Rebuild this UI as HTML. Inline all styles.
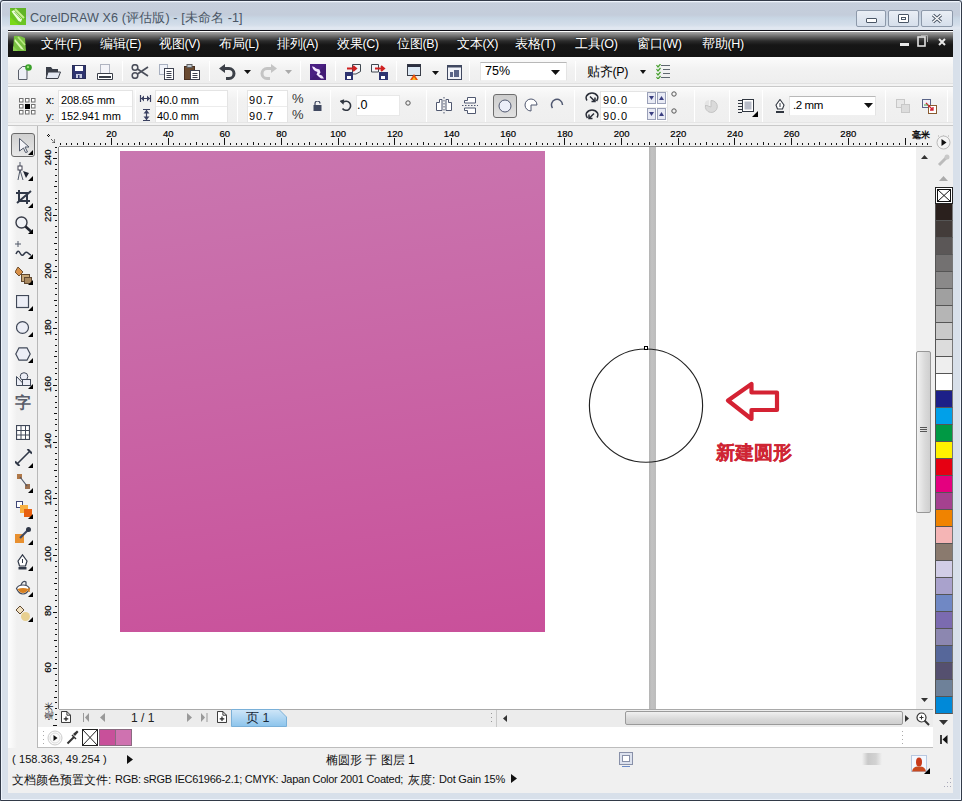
<!DOCTYPE html>
<html><head><meta charset="utf-8">
<style>
*{box-sizing:border-box;margin:0;padding:0}
html,body{width:962px;height:801px;overflow:hidden}
body{position:relative;background:#d7e1ee;font-family:"Liberation Sans",sans-serif;font-size:12px;color:#000}
.a{position:absolute}
#frame{left:0;top:0;width:962px;height:801px;border:1px solid #323a48;border-radius:3px 3px 0 0;background:linear-gradient(#f0f4fa 0,#c6cfdc 2px,#c4cddb 14px,#c8d6e4 17px,#d4deea 24px,#e2e8f1 27px,#d8e0ea 31px,#d8e0ea 100%);box-shadow:inset 1px 1px 0 #eef4fc, inset -1px -1px 0 #eef4fc}
#title{left:30px;top:10px;font-size:12.6px;color:#4a5564;white-space:nowrap;letter-spacing:0.1px}
.wb{top:10px;height:17px;border:1px solid #8d99aa;border-radius:2px;background:linear-gradient(#e9eef5,#d6dfeb)}
#menubar{left:8px;top:30px;width:945px;height:27px;border-top:1px solid #101018;background:linear-gradient(#fff 0,#fff 1px,#a8a8a8 1px,#6e6e6e 5px,#2c2c2c 10px,#161616 14px,#141414 100%)}
.mi{top:36px;color:#fff;font-size:12.5px;letter-spacing:-0.3px;white-space:nowrap;text-shadow:0 0 2px #000}
#tb1{left:8px;top:57px;width:945px;height:30px;background:linear-gradient(#ffffff 0,#fbfbfb 1px,#f2f2f2 12px,#eeeeee 26px,#e2e2e2 26px,#e2e2e2 27px,#f3f3f3 27px);border-bottom:1px solid #c9c9c9}
#tb2{left:8px;top:87px;width:945px;height:39px;background:linear-gradient(#ffffff 0,#fafafa 1px,#f1f1f1 14px,#efefef 35px,#e6e6e6 35px,#e6e6e6 36px,#f3f3f3 36px);border-bottom:1px solid #c9c9c9}
.sep{width:1px;background:#d3d3d3;border-right:1px solid #fff}
.inp{background:#fff;border:1px solid #e2e2e2}
#toolbox{left:8px;top:126px;width:30px;height:622px;background:linear-gradient(90deg,#fefefe,#f0f0f0 9px);border-right:1px solid #b8b8b8}
#hruler{left:38px;top:126px;width:895px;height:21px;background:#f0f0f0}
#vruler{left:38px;top:147px;width:21px;height:580px;background:#f0f0f0}
#canvas{left:59px;top:147px;width:857px;height:562px;background:#fff}
#vscroll{left:916px;top:147px;width:17px;height:562px;background:#f0f0f0}
#palette{left:933px;top:126px;width:20px;height:622px;background:#f0f0f0}
#navbar{left:59px;top:709px;width:874px;height:18px;background:#ececec;border-top:1px solid #a9a9a9}
#docpal{left:38px;top:727px;width:895px;height:21px;background:#fff;border-bottom:1px solid #bdbdbd}
#status{left:8px;top:748px;width:945px;height:45px;background:#f0f0f0}
.st{font-size:12px;color:#111;white-space:nowrap}
.sw{left:935px;width:18px;height:17px;border:1px solid #555;border-top:none;border-right-color:#777}
</style></head><body>
<div id="frame" class="a"></div>
<svg class="a" style="left:10px;top:8px" width="16" height="17" viewBox="0 0 16 17"><rect width="16" height="17" fill="#6cc524"/><path d="M0 0H16V12Z" fill="#5aa82a" opacity="0.6"/><path d="M1.5 3.5 L4 2 L12 11 L11 14 L8.5 13 Z" fill="#eaffd8"/><path d="M5 1 L14 10" stroke="#c8f090" stroke-width="2"/><path d="M4.5 4 L11 11" stroke="#8ab860" stroke-width="1"/><path d="M0 17 L0 9 L9 17Z" fill="#7ad818"/></svg>
<div id="title" class="a">CorelDRAW X6 (评估版) - [未命名 -1]</div>
<div class="a wb" style="left:856px;width:30px"><div class="a" style="left:9px;top:7px;width:11px;height:5px;border:1px solid #4a5666;border-radius:1px;background:#fff"></div></div>
<div class="a wb" style="left:888px;width:31px"><div class="a" style="left:9px;top:3px;width:11px;height:9px;border:1px solid #4a5666;border-radius:1px;background:#fff"><div class="a" style="left:2px;top:2px;width:5px;height:3px;border:1px solid #4a5666"></div></div></div>
<div class="a wb" style="left:921px;width:32px"><svg class="a" style="left:9px;top:2px" width="12" height="11"><path d="M2 2 L10 9 M10 2 L2 9" stroke="#4a5666" stroke-width="3.2"/><path d="M2 2 L10 9 M10 2 L2 9" stroke="#fff" stroke-width="1.3"/></svg></div>

<div id="menubar" class="a"></div>
<svg class="a" style="left:12px;top:35px" width="15" height="17" viewBox="0 0 15 17"><path d="M2 1 Q7 0 13 3 L14 16 H1 Z" fill="#78c040"/><path d="M3 4 L10 12 L12 15 L9 14 L2.5 6Z" fill="#d8f8b0"/><path d="M6 2 L13 10" stroke="#b8e880" stroke-width="1.6"/><path d="M1 16 V11 L6 16Z" fill="#8ad050"/></svg>
<div class="a mi" style="left:41px">文件(F)</div>
<div class="a mi" style="left:100px">编辑(E)</div>
<div class="a mi" style="left:159px">视图(V)</div>
<div class="a mi" style="left:219px">布局(L)</div>
<div class="a mi" style="left:277px">排列(A)</div>
<div class="a mi" style="left:337px">效果(C)</div>
<div class="a mi" style="left:397px">位图(B)</div>
<div class="a mi" style="left:457px">文本(X)</div>
<div class="a mi" style="left:515px">表格(T)</div>
<div class="a mi" style="left:575px">工具(O)</div>
<div class="a mi" style="left:637px">窗口(W)</div>
<div class="a mi" style="left:702px">帮助(H)</div>
<svg class="a" style="left:898px;top:33px" width="52" height="16"><rect x="2" y="10" width="9" height="3" fill="#e8e8e8"/><rect x="20" y="4" width="7" height="9" fill="none" stroke="#e0e0e0" stroke-width="1.6"/><path d="M23 2.5H29.5V9" fill="none" stroke="#aaa"/><path d="M41 6L47 12M47 6L41 12" stroke="#e8e8e8" stroke-width="2"/></svg>
<!--MENU_END-->
<div id="tb1" class="a"></div>
<!-- new -->
<svg class="a" style="left:16px;top:64px" width="17" height="16" viewBox="0 0 17 16"><path d="M2.5 15.5 V6 L6.5 2.5 H11 V15.5 Z" fill="#eef0f6" stroke="#5a5f6a"/><circle cx="12.5" cy="3.5" r="3.3" fill="#3aa02a"/><circle cx="12" cy="3" r="1.2" fill="#9be07a"/></svg>
<!-- open -->
<svg class="a" style="left:45px;top:65px" width="16" height="15" viewBox="0 0 16 15"><path d="M1 2 H6 L7.5 4 H13 V13.5 H1 Z" fill="#3a3e48"/><path d="M3 7 H15.5 L13 13.5 H1 Z" fill="#e4e8f2" stroke="#3a3e48"/></svg>
<!-- save -->
<svg class="a" style="left:72px;top:65px" width="14" height="14" viewBox="0 0 14 14"><rect x="0.5" y="0.5" width="13" height="13" fill="#2e3470" stroke="#2a2e58"/><rect x="3" y="1" width="8" height="5" fill="#fff"/><rect x="4" y="9" width="6" height="4" fill="#c8cce0"/><rect x="6" y="10" width="1.5" height="3" fill="#2e3470"/></svg>
<!-- print -->
<svg class="a" style="left:97px;top:64px" width="16" height="16" viewBox="0 0 16 16"><rect x="3.5" y="0.5" width="9" height="9" fill="#f4f4f8" stroke="#b0b4c0"/><path d="M0.5 9.5 H15.5 V15.5 H0.5 Z" fill="#fff" stroke="#3a3e48"/><rect x="2" y="12" width="12" height="2" fill="#3a3e48"/></svg>
<div class="a sep" style="left:122px;top:61px;height:20px"></div>
<!-- scissors -->
<svg class="a" style="left:131px;top:64px" width="18" height="15" viewBox="0 0 18 15"><circle cx="4" cy="3.5" r="2.8" fill="none" stroke="#4a4e5a" stroke-width="1.5"/><circle cx="4" cy="11.5" r="2.8" fill="none" stroke="#4a4e5a" stroke-width="1.5"/><path d="M6.5 5 L17 12 M6.5 10 L17 3" stroke="#4a4e5a" stroke-width="1.6"/></svg>
<!-- copy -->
<svg class="a" style="left:159px;top:64px" width="15" height="16" viewBox="0 0 15 16"><rect x="0.5" y="0.5" width="8" height="10" fill="#f0f2f8" stroke="#a8b0c0"/><rect x="5.5" y="4.5" width="9" height="11" fill="#fff" stroke="#3e4250"/><path d="M7.5 7.5 H12.5 M7.5 9.5 H12.5 M7.5 11.5 H12.5 M7.5 13.5 H12.5" stroke="#3e4250"/></svg>
<!-- paste -->
<svg class="a" style="left:184px;top:64px" width="16" height="16" viewBox="0 0 16 16"><rect x="0.5" y="2.5" width="10" height="13" fill="#6a4a30" stroke="#4a3020"/><rect x="3" y="0.5" width="5" height="3" fill="#c0c8d0" stroke="#606060"/><rect x="6.5" y="6.5" width="9" height="9" fill="#fff" stroke="#3e4250"/><path d="M8.5 9.5 H13.5 M8.5 11.5 H13.5 M8.5 13.5 H13.5" stroke="#3e4250"/></svg>
<div class="a sep" style="left:209px;top:61px;height:20px"></div>
<!-- undo -->
<svg class="a" style="left:219px;top:64px" width="17" height="16" viewBox="0 0 17 16"><path d="M5 4.5 H10 A5 5 0 0 1 10 14.5 H7" fill="none" stroke="#3c4048" stroke-width="3"/><path d="M0 4.5 L6 0 V9 Z" fill="#3c4048"/></svg>
<svg class="a" style="left:244px;top:70px" width="7" height="4"><path d="M0 0 H7 L3.5 4 Z" fill="#111"/></svg>
<!-- redo -->
<svg class="a" style="left:260px;top:64px" width="17" height="16" viewBox="0 0 17 16"><path d="M12 4.5 H7 A5 5 0 0 0 7 14.5 H10" fill="none" stroke="#c4c4c4" stroke-width="3"/><path d="M17 4.5 L11 0 V9 Z" fill="#c4c4c4"/></svg>
<svg class="a" style="left:285px;top:70px" width="7" height="4"><path d="M0 0 H7 L3.5 4 Z" fill="#aaa"/></svg>
<div class="a sep" style="left:300px;top:61px;height:20px"></div>
<!-- corel connect -->
<svg class="a" style="left:310px;top:64px" width="16" height="16" viewBox="0 0 16 16"><rect width="16" height="16" fill="#4a1f82"/><path d="M0 16 L16 0 V16Z" fill="#3a1868" opacity="0.5"/><path d="M2 2.5 Q4 2 6 4.5 L9.5 5.5 L10.5 8.5 L9 10.5 L12 11.5 L14 14.5 L11 14.5 L8.5 12.5 L6.5 10.5 L7.5 8 Q3.5 7 2 2.5Z" fill="#f4e8ff"/></svg>
<div class="a sep" style="left:335px;top:61px;height:20px"></div>
<!-- import -->
<svg class="a" style="left:345px;top:64px" width="16" height="16" viewBox="0 0 16 16"><path d="M7.5 0.5 H15.5 V7.5 L11 10 H7.5 Z" fill="#f4f4f8" stroke="#404850"/><rect x="0" y="8" width="8" height="8" fill="#2e3470"/><rect x="2" y="12" width="4" height="3" fill="#fff"/><path d="M2 4.5 H11 M8 2 L11 4.5 L8 7" stroke="#d02020" stroke-width="2" fill="none"/></svg>
<!-- export -->
<svg class="a" style="left:371px;top:64px" width="17" height="16" viewBox="0 0 17 16"><path d="M0.5 0.5 H7.5 V8 H0.5 Z" fill="#f4f4f8" stroke="#404850"/><rect x="8" y="8" width="9" height="8" fill="#2e3470"/><rect x="10" y="12" width="4" height="3" fill="#fff"/><path d="M4 4.5 H13 M10 2 L13 4.5 L10 7" stroke="#d02020" stroke-width="2" fill="none"/></svg>
<div class="a sep" style="left:396px;top:61px;height:20px"></div>
<!-- publish -->
<svg class="a" style="left:407px;top:64px" width="14" height="16" viewBox="0 0 14 16"><rect x="0.5" y="0.5" width="13" height="11" fill="#dce8f4" stroke="#3a3e48"/><rect x="0.5" y="0.5" width="13" height="2.5" fill="#2a2e40"/><path d="M3 16 L7 10 L11 16 Z" fill="#e85010"/><path d="M5 16 L7 13 L9 16Z" fill="#f8c020"/></svg>
<svg class="a" style="left:432px;top:71px" width="7" height="4"><path d="M0 0 H7 L3.5 4 Z" fill="#111"/></svg>
<!-- app launcher -->
<svg class="a" style="left:447px;top:65px" width="15" height="15" viewBox="0 0 15 15"><rect x="0.5" y="0.5" width="14" height="14" fill="#f0f2f8" stroke="#404860"/><rect x="0.5" y="0.5" width="14" height="2" fill="#404860"/><path d="M3 12 V7 H6 V12 Z M7 12 V5 H12 V12 Z" fill="#5a6488"/></svg>
<div class="a sep" style="left:469px;top:61px;height:20px"></div>
<!-- zoom combo -->
<div class="a inp" style="left:480px;top:62px;width:87px;height:19px;border-color:#b8b8b8 #e4e4e4 #f0f0f0 #e4e4e4"></div>
<div class="a" style="left:485px;top:64px;font-size:12.5px">75%</div>
<svg class="a" style="left:551px;top:70px" width="9" height="5"><path d="M0 0 H9 L4.5 5 Z" fill="#111"/></svg>
<div class="a sep" style="left:575px;top:61px;height:20px"></div>
<div class="a" style="left:587px;top:64px;font-size:12.5px;letter-spacing:-0.3px">贴齐(P)</div>
<svg class="a" style="left:640px;top:70px" width="6" height="4"><path d="M0 0 H6 L3 4 Z" fill="#111"/></svg>
<svg class="a" style="left:656px;top:64px" width="15" height="15" viewBox="0 0 15 15"><path d="M5 1.5 H14 M7 5.5 H14 M7 9.5 H14 M5 13.5 H14" stroke="#606870" stroke-width="1"/><path d="M0.5 1 L2 3 L4.5 0 M0.5 5 L2 7 L4.5 4 M0.5 9 L2 11 L4.5 8 M0.5 13 L2 15 L4.5 12" stroke="#48a030" stroke-width="1.2" fill="none"/></svg>
<!--TB1_END-->
<div id="tb2" class="a"></div>
<!-- grid icon -->
<svg class="a" style="left:19px;top:98px" width="17" height="17" viewBox="0 0 17 17"><g fill="#fff" stroke="#707070"><rect x="0.5" y="0.5" width="3.5" height="3.5"/><rect x="6.5" y="0.5" width="3.5" height="3.5"/><rect x="12.5" y="0.5" width="3.5" height="3.5"/><rect x="0.5" y="6.5" width="3.5" height="3.5"/><rect x="12.5" y="6.5" width="3.5" height="3.5"/><rect x="0.5" y="12.5" width="3.5" height="3.5"/><rect x="6.5" y="12.5" width="3.5" height="3.5"/><rect x="12.5" y="12.5" width="3.5" height="3.5"/></g><rect x="6" y="6" width="5" height="5" fill="#000"/></svg>
<div class="a" style="left:46px;top:92px;font-size:11px;line-height:16px;letter-spacing:-0.15px">x:<br>y:</div>
<div class="a inp" style="left:58px;top:90px;width:75px;height:33px;border-color:#e4e4e4"><div class="a" style="left:0;top:15px;width:73px;height:1px;background:#ececec"></div></div>
<div class="a" style="left:61px;top:92px;font-size:11px;line-height:16px;letter-spacing:-0.15px;white-space:nowrap">208.65 mm<br>152.941 mm</div>
<div class="a sep" style="left:135px;top:90px;height:32px;background:#e0e0e0"></div>
<svg class="a" style="left:139px;top:95px" width="13" height="7" viewBox="0 0 13 7"><path d="M1.5 0 V7 M11.5 0 V7 M2 3.5 H11" stroke="#3a4060" stroke-width="1.2"/><path d="M2 3.5 L5 0.5 V6.5Z M11 3.5 L8 0.5 V6.5Z" fill="#3a4060"/></svg>
<svg class="a" style="left:143px;top:109px" width="7" height="12" viewBox="0 0 7 12"><path d="M0 0.5 H7 M0 11.5 H7 M3.5 1 V11" stroke="#3a4060" stroke-width="1.2"/><path d="M3.5 1 L0.5 4.5 H6.5Z M3.5 11 L0.5 7.5 H6.5Z" fill="#3a4060"/></svg>
<div class="a inp" style="left:155px;top:90px;width:73px;height:33px;border-color:#e4e4e4"><div class="a" style="left:0;top:15px;width:71px;height:1px;background:#ececec"></div></div>
<div class="a" style="left:157px;top:92px;font-size:11px;line-height:16px;letter-spacing:-0.15px;white-space:nowrap">40.0 mm<br>40.0 mm</div>
<div class="a sep" style="left:237px;top:90px;height:32px"></div>
<div class="a inp" style="left:247px;top:90px;width:41px;height:33px;border-color:#e4e4e4"><div class="a" style="left:0;top:15px;width:39px;height:1px;background:#ececec"></div></div>
<div class="a" style="left:249px;top:92px;font-size:11px;line-height:16px;letter-spacing:0.9px;white-space:nowrap">90.7<br>90.7</div>
<div class="a" style="left:292px;top:91px;font-size:13px;line-height:16px;color:#333">%<br>%</div>
<svg class="a" style="left:313px;top:101px" width="9" height="10" viewBox="0 0 9 10"><path d="M2 4 V2.5 A2.5 2.5 0 0 1 7 2.5" fill="none" stroke="#404860" stroke-width="1.2"/><rect x="0.5" y="4" width="8" height="6" fill="#404860"/></svg>
<div class="a sep" style="left:330px;top:90px;height:32px"></div>
<svg class="a" style="left:340px;top:99px" width="12" height="13" viewBox="0 0 12 13"><path d="M3 3.5 A4.5 4.5 0 1 1 2.5 9.5" fill="none" stroke="#303640" stroke-width="1.6"/><path d="M0 1 L5 1 L2.5 6 Z" fill="#303640" transform="rotate(-20 2.5 3)"/></svg>
<div class="a inp" style="left:356px;top:95px;width:44px;height:21px;border-color:#e8e8e8"></div>
<div class="a" style="left:357px;top:98px;font-size:12.5px">.0</div>
<svg class="a" style="left:405px;top:100px" width="6" height="6"><circle cx="3" cy="3" r="2.2" fill="none" stroke="#555"/></svg>
<div class="a sep" style="left:426px;top:90px;height:32px"></div>
<svg class="a" style="left:436px;top:97px" width="16" height="17" viewBox="0 0 16 17"><path d="M0.5 5.5 H3.5 V2.5 H6 V13.5 H0.5 Z M15.5 5.5 H12.5 V2.5 H10 V13.5 H15.5 Z" fill="#fff" stroke="#505870"/><path d="M8 0 V17" stroke="#505870" stroke-dasharray="1.5 1.5"/></svg>
<svg class="a" style="left:462px;top:97px" width="16" height="17" viewBox="0 0 16 17"><path d="M5.5 0.5 V3.5 H2.5 V6 H13.5 V0.5 Z M5.5 16.5 V13.5 H2.5 V11 H13.5 V16.5 Z" fill="#fff" stroke="#505870"/><path d="M0 8.5 H16" stroke="#505870" stroke-dasharray="1.5 1.5"/></svg>
<div class="a sep" style="left:485px;top:90px;height:32px"></div>
<div class="a" style="left:493px;top:94px;width:24px;height:24px;border:1px solid #6e6e6e;border-radius:3px;background:linear-gradient(#cdcdcd,#e2e2e2)"></div>
<svg class="a" style="left:498px;top:99px" width="14" height="14"><circle cx="7" cy="7" r="6" fill="#eceef8" stroke="#505870"/></svg>
<svg class="a" style="left:524px;top:98px" width="14" height="14" viewBox="0 0 14 14"><path d="M7 7 H13 A6 6 0 1 0 7 13 Z" fill="#fff" stroke="#505870"/></svg>
<svg class="a" style="left:550px;top:98px" width="14" height="14" viewBox="0 0 14 14"><path d="M2.5 10 A5.5 5.5 0 1 1 12.5 7" fill="none" stroke="#505870" stroke-width="1.5"/></svg>
<div class="a sep" style="left:574px;top:90px;height:32px"></div>
<svg class="a" style="left:585px;top:92px" width="14" height="11" viewBox="0 0 14 11"><path d="M2 8.5 Q0.5 6 1.5 4 Q3.5 1 7 1 Q10.5 1 12.5 4 Q13.5 6 11.5 9" fill="none" stroke="#2a2e38" stroke-width="1.5"/><path d="M5 4.5 L10 9.5 M10 5.5 V9.5 H6.5" fill="none" stroke="#2a2e38" stroke-width="1.5"/></svg><svg class="a" style="left:585px;top:109px" width="14" height="11" viewBox="0 0 14 11"><path d="M2.5 9 Q0.5 6 1.5 4 Q3.5 1 7 1 Q10.5 1 12.5 4 Q13.5 6 12 8.5" fill="none" stroke="#2a2e38" stroke-width="1.5"/><path d="M9 4.5 L4 9.5 M4 5.5 V9.5 H7.5" fill="none" stroke="#2a2e38" stroke-width="1.5"/></svg>
<div class="a inp" style="left:600px;top:91px;width:68px;height:31px;border-color:#e4e4e4"><div class="a" style="left:0;top:15px;width:66px;height:1px;background:#ececec"></div></div>
<div class="a" style="left:603px;top:92px;font-size:11px;line-height:16px;letter-spacing:0.9px">90.0<br>90.0</div>
<div class="a" style="left:647px;top:92px;width:9px;height:12px;border:1px solid #9aa0b8;background:#e8eaf4"></div>
<div class="a" style="left:657px;top:92px;width:9px;height:12px;border:1px solid #9aa0b8;background:#e8eaf4"></div>
<div class="a" style="left:647px;top:108px;width:9px;height:12px;border:1px solid #9aa0b8;background:#e8eaf4"></div>
<div class="a" style="left:657px;top:108px;width:9px;height:12px;border:1px solid #9aa0b8;background:#e8eaf4"></div>
<svg class="a" style="left:649px;top:96px" width="5" height="4"><path d="M0 0H5L2.5 4Z" fill="#3a3e80"/></svg>
<svg class="a" style="left:659px;top:96px" width="5" height="4"><path d="M0 4H5L2.5 0Z" fill="#3a3e80"/></svg>
<svg class="a" style="left:649px;top:112px" width="5" height="4"><path d="M0 0H5L2.5 4Z" fill="#3a3e80"/></svg>
<svg class="a" style="left:659px;top:112px" width="5" height="4"><path d="M0 4H5L2.5 0Z" fill="#3a3e80"/></svg>
<svg class="a" style="left:671px;top:91px" width="6" height="6"><circle cx="3" cy="3" r="2.2" fill="none" stroke="#555"/></svg>
<svg class="a" style="left:671px;top:108px" width="6" height="6"><circle cx="3" cy="3" r="2.2" fill="none" stroke="#555"/></svg>
<div class="a sep" style="left:694px;top:90px;height:32px"></div>
<svg class="a" style="left:704px;top:99px" width="14" height="15" viewBox="0 0 14 15"><path d="M7 8 V1.5 A6 6 0 1 1 1.5 6 Z" fill="#dadada" stroke="#c4c4c4"/><path d="M5 6 L5 1 A5 5 0 0 0 0.5 5.5 Z" fill="#e4e4e4"/></svg>
<div class="a sep" style="left:729px;top:90px;height:32px"></div>
<svg class="a" style="left:738px;top:98px" width="20" height="19" viewBox="0 0 20 19"><path d="M0 2.5 H4 M0 5.5 H4 M0 8.5 H4 M0 11.5 H4 M0 14.5 H4" stroke="#303640"/><rect x="4.5" y="1.5" width="11" height="12" fill="#fff" stroke="#303640"/><rect x="6.5" y="3.5" width="7" height="8" fill="#b8bcc8"/><path d="M20 13 V19 H14 Z" fill="#000"/></svg>
<div class="a sep" style="left:762px;top:90px;height:32px"></div>
<svg class="a" style="left:775px;top:99px" width="10" height="14" viewBox="0 0 10 14"><path d="M5 0.5 L9 6 L7.5 10 H2.5 L1 6 Z" fill="#fff" stroke="#303640" stroke-width="1.1"/><path d="M5 4 V8" stroke="#303640"/><rect x="1" y="12" width="8" height="2" fill="#303640"/></svg>
<div class="a inp" style="left:789px;top:96px;width:87px;height:20px;border-color:#b8b8b8 #e4e4e4 #f0f0f0 #e4e4e4"></div>
<div class="a" style="left:793px;top:99px;font-size:11.5px;letter-spacing:-0.4px">.2 mm</div>
<svg class="a" style="left:864px;top:103px" width="9" height="5"><path d="M0 0 H9 L4.5 5 Z" fill="#111"/></svg>
<div class="a sep" style="left:885px;top:90px;height:32px"></div>
<svg class="a" style="left:896px;top:99px" width="14" height="14" viewBox="0 0 14 14"><rect x="0.5" y="0.5" width="8" height="8" fill="#e8e8e8" stroke="#c8c8c8"/><rect x="5.5" y="5.5" width="8" height="8" fill="#dcdcdc" stroke="#c8c8c8"/></svg>
<svg class="a" style="left:922px;top:99px" width="15" height="15" viewBox="0 0 15 15"><rect x="0.5" y="0.5" width="8" height="8" fill="#f0f0f8" stroke="#5a6488"/><rect x="6.5" y="6.5" width="8" height="8" fill="#fff" stroke="#8a5a30"/><path d="M4 4 L11 11 M8 11 H11 V8" stroke="#d02030" fill="none" stroke-width="1.3"/><path d="M2 6 H6" stroke="#40a040"/></svg>
<div class="a sep" style="left:947px;top:90px;height:32px"></div>
<!--TB2_END-->
<div id="toolbox" class="a"></div>
<div class="a" style="left:11px;top:133px;width:24px;height:24px;border:1px solid #6a6a6a;border-radius:3px;background:linear-gradient(#d0d0d0,#e8e8e8)"></div>
<svg class="a" style="left:19px;top:138px" width="11" height="15" viewBox="0 0 11 15"><path d="M0.5 0.5 L10 9 H6 L8.5 14 L6.5 14.5 L4.5 10 L0.5 13 Z" fill="#f4f4f8" stroke="#505868"/></svg>
<svg class="a" style="left:16px;top:162px" width="18" height="20" viewBox="0 0 18 20"><path d="M4 0 V4 M4 8 L2 18 M4 8 L7 18" stroke="#505868"/><rect x="2" y="4" width="4" height="4" fill="#fff" stroke="#404050"/><path d="M7 9 L13 11 L10 16 Z" fill="#202430"/></svg>
<svg class="a" style="left:16px;top:190px" width="16" height="15" viewBox="0 0 16 15"><path d="M3 0V11H14 M0 3H11V14 M1 13L15 1" stroke="#303848" stroke-width="2" fill="none"/></svg>
<svg class="a" style="left:15px;top:216px" width="17" height="16" viewBox="0 0 17 16"><circle cx="6.5" cy="6.5" r="5.5" fill="#f0f2f6" stroke="#383c48" stroke-width="1.4"/><path d="M10.5 10.5L16 15.5" stroke="#202430" stroke-width="2.6"/></svg>
<svg class="a" style="left:15px;top:241px" width="17" height="18" viewBox="0 0 17 18"><path d="M3 0V6M0 3H6" stroke="#505868"/><path d="M1 13 Q3 8 5 12 T9 13 T13 12 T16 14" fill="none" stroke="#303848" stroke-width="1.5"/></svg>
<svg class="a" style="left:15px;top:266px" width="18" height="19" viewBox="0 0 18 19"><path d="M3 1 L8 6 L4 10 L0 6Z" fill="#d89048" stroke="#705030"/><rect x="6.5" y="8.5" width="8" height="7" fill="#c8a878" stroke="#604830"/><rect x="9.5" y="11.5" width="7" height="6" fill="#a88860" stroke="#604830"/></svg>
<svg class="a" style="left:16px;top:295px" width="14" height="14" viewBox="0 0 14 14"><rect x="0.5" y="0.5" width="12" height="12" fill="#eceef6" stroke="#404858" stroke-width="1.2"/></svg>
<svg class="a" style="left:16px;top:321px" width="14" height="13" viewBox="0 0 14 13"><ellipse cx="6.5" cy="6.5" rx="6" ry="5.8" fill="#eceef6" stroke="#404858" stroke-width="1.2"/></svg>
<svg class="a" style="left:15px;top:347px" width="16" height="14" viewBox="0 0 16 14"><path d="M4 0.8 H12 L15.2 7 L12 13.2 H4 L0.8 7 Z" fill="#eceef6" stroke="#404858" stroke-width="1.2"/></svg>
<svg class="a" style="left:16px;top:372px" width="15" height="14" viewBox="0 0 15 14"><path d="M0.5 4.5 V13.5 H9 Z" fill="#eceef6" stroke="#404858"/><circle cx="8" cy="4.5" r="3.8" fill="#eceef6" stroke="#404858"/><rect x="6.5" y="7.5" width="8" height="6" fill="#eceef6" stroke="#404858"/></svg>
<div class="a" style="left:15px;top:393px;font-size:16px;font-weight:bold;color:#5a5e6a;line-height:20px">字</div>
<svg class="a" style="left:16px;top:425px" width="14" height="15" viewBox="0 0 14 15"><rect x="0.5" y="0.5" width="13" height="14" fill="#fff" stroke="#404858" stroke-width="1.2"/><path d="M0.5 5.5H13.5M0.5 10H13.5M5 0.5V14.5M9.5 0.5V14.5" stroke="#404858"/></svg>
<svg class="a" style="left:15px;top:449px" width="17" height="17" viewBox="0 0 17 17"><path d="M2 15 L15 2" stroke="#303848" stroke-width="1.6"/><path d="M0 12.5 L4.5 17 M12.5 0 L17 4.5" stroke="#303848" stroke-width="2"/></svg>
<svg class="a" style="left:17px;top:474px" width="14" height="16" viewBox="0 0 14 16"><rect x="0" y="0" width="5" height="5" fill="#b07848"/><rect x="8" y="10" width="5" height="5" fill="#9a7050"/><path d="M3 3 L10 12" stroke="#505868" stroke-width="1.2"/></svg>
<svg class="a" style="left:16px;top:501px" width="17" height="17" viewBox="0 0 17 17"><rect x="0.5" y="0.5" width="6" height="6" fill="#fff" stroke="#404878"/><rect x="4" y="4" width="8" height="8" fill="#f8b040"/><rect x="8" y="8" width="8" height="8" fill="#e86010"/></svg>
<svg class="a" style="left:15px;top:527px" width="17" height="17" viewBox="0 0 17 17"><rect x="0" y="7" width="9" height="9" fill="#e89030"/><path d="M5 11 L13 3" stroke="#404860" stroke-width="2.2"/><circle cx="13.5" cy="2.5" r="2.5" fill="#303848"/></svg>
<svg class="a" style="left:17px;top:554px" width="11" height="16" viewBox="0 0 11 16"><path d="M5.5 0.8 L10 7 L8.5 12 H2.5 L1 7 Z" fill="#fff" stroke="#303848" stroke-width="1.2"/><path d="M5.5 5V9" stroke="#303848"/><rect x="1.5" y="13" width="8" height="2.5" fill="#303848"/></svg>
<svg class="a" style="left:15px;top:579px" width="16" height="17" viewBox="0 0 16 17"><path d="M6 6 Q8 1 11 3 L11 8" fill="none" stroke="#404858" stroke-width="1.2"/><path d="M1.5 9.5 Q3 6 8 6 Q13 6 14.5 9.5 Q12 15 8 15 Q4 15 1.5 9.5Z" fill="#fff" stroke="#404858" stroke-width="1.2"/><path d="M2.5 10 Q8 8 13.5 10 Q11.5 14 8 14 Q4.5 14 2.5 10Z" fill="#d88020"/><path d="M14 9 V13" stroke="#d88020" stroke-width="1.5"/></svg>
<svg class="a" style="left:16px;top:605px" width="15" height="17" viewBox="0 0 15 17"><path d="M4 1 L8 5 L4 9 L0 5 Z" fill="#f0e0c0" stroke="#604830"/><circle cx="9.5" cy="11.5" r="4.5" fill="#e8d090"/></svg>
<svg class="a" width="962" height="801" style="left:0;top:0;pointer-events:none"><g fill="#000"><path d="M28 155H33V150Z"/><path d="M28 181H33V176Z"/><path d="M28 208H33V203Z"/><path d="M28 234H33V229Z"/><path d="M28 259H33V254Z"/><path d="M28 285H33V280Z"/><path d="M28 311H33V306Z"/><path d="M28 337H33V332Z"/><path d="M28 363H33V358Z"/><path d="M28 389H33V384Z"/><path d="M28 468H33V463Z"/><path d="M28 493H33V488Z"/><path d="M28 519H33V514Z"/><path d="M28 545H33V540Z"/><path d="M28 571H33V566Z"/><path d="M28 597H33V592Z"/><path d="M28 622H33V617Z"/></g></svg>
<div id="hruler" class="a"></div>
<div id="vruler" class="a"></div>
<div id="canvas" class="a"></div>
<!--R0--><svg class="a" style="left:38px;top:126px" width="895" height="21"><path d="M22.5 17V19 M28.5 17V19 M33.5 17V19 M39.5 17V19 M45.5 16V19 M50.5 17V19 M56.5 17V19 M62.5 17V19 M67.5 17V19 M73.5 12V19 M79.5 17V19 M84.5 17V19 M90.5 17V19 M96.5 17V19 M101.5 16V19 M107.5 17V19 M113.5 17V19 M118.5 17V19 M124.5 17V19 M130.5 12V19 M135.5 17V19 M141.5 17V19 M147.5 17V19 M152.5 17V19 M158.5 16V19 M164.5 17V19 M169.5 17V19 M175.5 17V19 M181.5 17V19 M186.5 12V19 M192.5 17V19 M198.5 17V19 M203.5 17V19 M209.5 17V19 M215.5 16V19 M220.5 17V19 M226.5 17V19 M232.5 17V19 M237.5 17V19 M243.5 12V19 M249.5 17V19 M254.5 17V19 M260.5 17V19 M266.5 17V19 M271.5 16V19 M277.5 17V19 M283.5 17V19 M288.5 17V19 M294.5 17V19 M300.5 12V19 M305.5 17V19 M311.5 17V19 M317.5 17V19 M322.5 17V19 M328.5 16V19 M334.5 17V19 M339.5 17V19 M345.5 17V19 M351.5 17V19 M356.5 12V19 M362.5 17V19 M368.5 17V19 M373.5 17V19 M379.5 17V19 M385.5 16V19 M390.5 17V19 M396.5 17V19 M402.5 17V19 M407.5 17V19 M413.5 12V19 M419.5 17V19 M424.5 17V19 M430.5 17V19 M436.5 17V19 M441.5 16V19 M447.5 17V19 M453.5 17V19 M458.5 17V19 M464.5 17V19 M470.5 12V19 M475.5 17V19 M481.5 17V19 M487.5 17V19 M492.5 17V19 M498.5 16V19 M504.5 17V19 M509.5 17V19 M515.5 17V19 M521.5 17V19 M526.5 12V19 M532.5 17V19 M538.5 17V19 M543.5 17V19 M549.5 17V19 M555.5 16V19 M560.5 17V19 M566.5 17V19 M572.5 17V19 M577.5 17V19 M583.5 12V19 M589.5 17V19 M594.5 17V19 M600.5 17V19 M606.5 17V19 M611.5 16V19 M617.5 17V19 M623.5 17V19 M628.5 17V19 M634.5 17V19 M640.5 12V19 M645.5 17V19 M651.5 17V19 M657.5 17V19 M662.5 17V19 M668.5 16V19 M674.5 17V19 M679.5 17V19 M685.5 17V19 M691.5 17V19 M696.5 12V19 M702.5 17V19 M708.5 17V19 M713.5 17V19 M719.5 17V19 M725.5 16V19 M730.5 17V19 M736.5 17V19 M742.5 17V19 M747.5 17V19 M753.5 12V19 M759.5 17V19 M764.5 17V19 M770.5 17V19 M776.5 17V19 M781.5 16V19 M787.5 17V19 M793.5 17V19 M798.5 17V19 M804.5 17V19 M810.5 12V19 M815.5 17V19 M821.5 17V19 M827.5 17V19 M832.5 17V19 M838.5 16V19 M844.5 17V19 M849.5 17V19 M855.5 17V19 M861.5 17V19 M867.5 12V19 M872.5 17V19 M878.5 17V19 M884.5 17V19 M889.5 17V19" stroke="#111" stroke-width="1"/><path d="M21 20.5H894" stroke="#8c8c8c"/><g font-family="Liberation Sans" font-size="9.5" text-anchor="middle" fill="#000" stroke="#000" stroke-width="0.2"><text x="73.5" y="10.5">20</text><text x="130.2" y="10.5">40</text><text x="186.8" y="10.5">60</text><text x="243.5" y="10.5">80</text><text x="300.2" y="10.5">100</text><text x="356.9" y="10.5">120</text><text x="413.6" y="10.5">140</text><text x="470.2" y="10.5">160</text><text x="526.9" y="10.5">180</text><text x="583.6" y="10.5">200</text><text x="640.3" y="10.5">220</text><text x="697.0" y="10.5">240</text><text x="753.6" y="10.5">260</text><text x="810.3" y="10.5">280</text></g><text x="874" y="11.5" font-size="8.5" fill="#000" stroke="#000" stroke-width="0.3">毫米</text></svg>
<svg class="a" style="left:38px;top:147px" width="21" height="580"><path d="M17 0.5H19 M17 5.5H19 M15 11.5H19 M17 17.5H19 M17 22.5H19 M17 28.5H19 M17 34.5H19 M16 39.5H19 M17 45.5H19 M17 51.5H19 M17 56.5H19 M17 62.5H19 M15 68.5H19 M17 73.5H19 M17 79.5H19 M17 85.5H19 M17 90.5H19 M16 96.5H19 M17 102.5H19 M17 107.5H19 M17 113.5H19 M17 119.5H19 M15 124.5H19 M17 130.5H19 M17 136.5H19 M17 141.5H19 M17 147.5H19 M16 153.5H19 M17 158.5H19 M17 164.5H19 M17 170.5H19 M17 175.5H19 M15 181.5H19 M17 187.5H19 M17 192.5H19 M17 198.5H19 M17 204.5H19 M16 209.5H19 M17 215.5H19 M17 221.5H19 M17 226.5H19 M17 232.5H19 M15 238.5H19 M17 243.5H19 M17 249.5H19 M17 255.5H19 M17 260.5H19 M16 266.5H19 M17 272.5H19 M17 277.5H19 M17 283.5H19 M17 289.5H19 M15 295.5H19 M17 300.5H19 M17 306.5H19 M17 312.5H19 M17 317.5H19 M16 323.5H19 M17 329.5H19 M17 334.5H19 M17 340.5H19 M17 346.5H19 M15 351.5H19 M17 357.5H19 M17 363.5H19 M17 368.5H19 M17 374.5H19 M16 380.5H19 M17 385.5H19 M17 391.5H19 M17 397.5H19 M17 402.5H19 M15 408.5H19 M17 414.5H19 M17 419.5H19 M17 425.5H19 M17 431.5H19 M16 436.5H19 M17 442.5H19 M17 448.5H19 M17 453.5H19 M17 459.5H19 M15 465.5H19 M17 470.5H19 M17 476.5H19 M17 482.5H19 M17 487.5H19 M16 493.5H19 M17 499.5H19 M17 504.5H19 M17 510.5H19 M17 516.5H19 M15 521.5H19 M17 527.5H19 M17 533.5H19 M17 538.5H19 M17 544.5H19 M16 550.5H19 M17 555.5H19 M17 561.5H19 M17 567.5H19 M17 572.5H19 M15 578.5H19" stroke="#111"/><path d="M20.5 0V562" stroke="#8c8c8c"/><g font-family="Liberation Sans" font-size="9.5" fill="#000" stroke="#000" stroke-width="0.2"><text transform="translate(13 10.4) rotate(-90)" text-anchor="middle">240</text><text transform="translate(13 67.1) rotate(-90)" text-anchor="middle">220</text><text transform="translate(13 123.8) rotate(-90)" text-anchor="middle">200</text><text transform="translate(13 180.4) rotate(-90)" text-anchor="middle">180</text><text transform="translate(13 237.1) rotate(-90)" text-anchor="middle">160</text><text transform="translate(13 293.8) rotate(-90)" text-anchor="middle">140</text><text transform="translate(13 350.5) rotate(-90)" text-anchor="middle">120</text><text transform="translate(13 407.2) rotate(-90)" text-anchor="middle">100</text><text transform="translate(13 463.8) rotate(-90)" text-anchor="middle">80</text><text transform="translate(13 520.5) rotate(-90)" text-anchor="middle">60</text></g><text transform="translate(13.5 564) rotate(-90)" font-size="8.5" text-anchor="middle" fill="#222">毫米</text></svg><!--R1-->
<svg class="a" style="left:46px;top:134px" width="9" height="10" viewBox="0 0 9 10"><path d="M1 1.5H4M2.5 0V3M5 5L8.5 8.5M8.5 5.5V8.5H5.5" stroke="#111" fill="none" stroke-dasharray="1 1"/></svg>
<!-- pink rect -->
<div class="a" style="left:120px;top:151px;width:425px;height:481px;background:linear-gradient(172deg,#c977b0 0%,#c966a6 45%,#c9509a 100%)"></div>
<!-- guideline -->
<div class="a" style="left:649px;top:147px;width:7px;height:562px;background:linear-gradient(90deg,#b4b4b4,#c2c2c2 40%,#bcbcbc)"></div>
<!-- circle -->
<svg class="a" style="left:580px;top:340px" width="132" height="132"><circle cx="66" cy="65.6" r="56.6" fill="none" stroke="#222" stroke-width="1.15"/><rect x="64.5" y="6.5" width="3" height="3" fill="#fff" stroke="#000"/></svg>
<!-- arrow -->
<svg class="a" style="left:720px;top:376px" width="66" height="52"><path d="M8 24.5 L31.5 8 V16.5 H57 V34 H31.5 V43 Z" fill="none" stroke="#d42233" stroke-width="4.2" stroke-linejoin="round"/></svg>
<div class="a" style="left:716px;top:440px;font-size:18.5px;font-weight:bold;color:#cf2534;white-space:nowrap;letter-spacing:0px;-webkit-text-stroke:0.25px #cf2534">新建圆形</div>
<!-- vscroll -->
<div id="vscroll" class="a"></div>
<svg class="a" style="left:921px;top:155px" width="7" height="4"><path d="M0 4H7L3.5 0Z" fill="#333"/></svg>
<div class="a" style="left:916px;top:351px;width:15px;height:162px;border:1px solid #979797;border-radius:2px;background:linear-gradient(90deg,#f2f2f2,#dadada 60%,#cfcfcf)"></div>
<svg class="a" style="left:919px;top:426px" width="9" height="8"><path d="M1 1.5H8M1 3.5H8M1 5.5H8" stroke="#555"/></svg>
<svg class="a" style="left:921px;top:698px" width="7" height="4"><path d="M0 0H7L3.5 4Z" fill="#333"/></svg>
<!-- palette -->
<div id="palette" class="a"></div>
<svg class="a" style="left:935px;top:134px" width="17" height="4"><path d="M3 2h1M8 2h1M13 2h1" stroke="#aaa"/></svg>
<svg class="a" style="left:936px;top:135px" width="15" height="15"><circle cx="7.5" cy="7.5" r="6.5" fill="#f4f4f4" stroke="#bbb"/><path d="M5.5 4 L10.5 7.5 L5.5 11Z" fill="#111"/></svg>
<svg class="a" style="left:936px;top:153px" width="15" height="15"><path d="M3 12 L10 5" stroke="#bbb" stroke-width="3"/><circle cx="11" cy="4" r="2.5" fill="#c8c8c8"/></svg>
<svg class="a" style="left:939px;top:176px" width="9" height="5"><path d="M0 5H9L4.5 0Z" fill="#aaa"/></svg>
<div class="a" style="left:935px;top:187px;width:18px;height:17px;background:#fff;border:1px solid #222"></div>
<svg class="a" style="left:937px;top:189px" width="14" height="13"><rect x="0.5" y="0.5" width="13" height="12" fill="#fff" stroke="#111"/><path d="M0.5 0.5L13.5 12.5M13.5 0.5L0.5 12.5" stroke="#111"/></svg>
<div class="a sw" style="top:204px;background:#2a201d"></div>
<div class="a sw" style="top:221px;background:#433c3a"></div>
<div class="a sw" style="top:238px;background:#5b5757"></div>
<div class="a sw" style="top:255px;background:#737171"></div>
<div class="a sw" style="top:272px;background:#8a8989"></div>
<div class="a sw" style="top:289px;background:#a0a0a0"></div>
<div class="a sw" style="top:306px;background:#b5b5b5"></div>
<div class="a sw" style="top:323px;background:#c9c9c9"></div>
<div class="a sw" style="top:340px;background:#dcdcdc"></div>
<div class="a sw" style="top:357px;background:#eeeeee"></div>
<div class="a sw" style="top:374px;background:#ffffff"></div>
<div class="a sw" style="top:391px;background:#1d2088"></div>
<div class="a sw" style="top:408px;background:#00a0e9"></div>
<div class="a sw" style="top:425px;background:#009944"></div>
<div class="a sw" style="top:442px;background:#fff100"></div>
<div class="a sw" style="top:459px;background:#e60012"></div>
<div class="a sw" style="top:476px;background:#e4007f"></div>
<div class="a sw" style="top:493px;background:#a5418f"></div>
<div class="a sw" style="top:510px;background:#f08300"></div>
<div class="a sw" style="top:527px;background:#f5b5b5"></div>
<div class="a sw" style="top:544px;background:#8a7a6e"></div>
<div class="a sw" style="top:561px;background:#d1cde6"></div>
<div class="a sw" style="top:578px;background:#a9a2cc"></div>
<div class="a sw" style="top:595px;background:#7088c4"></div>
<div class="a sw" style="top:612px;background:#7b6bb0"></div>
<div class="a sw" style="top:629px;background:#8c87b0"></div>
<div class="a sw" style="top:646px;background:#56679a"></div>
<div class="a sw" style="top:663px;background:#55506f"></div>
<div class="a sw" style="top:680px;background:#6e8199"></div>
<div class="a sw" style="top:697px;background:#0089d8"></div>
<svg class="a" style="left:939px;top:720px" width="9" height="5"><path d="M0 0H9L4.5 5Z" fill="#333"/></svg>
<svg class="a" style="left:940px;top:735px" width="8" height="9"><path d="M1 0V9" stroke="#111" stroke-width="1.6"/><path d="M7.5 0V9L2.5 4.5Z" fill="#111"/></svg>
<!-- nav bar -->
<div id="navbar" class="a"></div>
<svg class="a" style="left:61px;top:711px" width="10" height="12" viewBox="0 0 11 13"><path d="M0.5 0.5H6.5L10.5 4.5V12.5H0.5Z" fill="#fff" stroke="#222"/><path d="M6.5 0.5V4.5H10.5" fill="none" stroke="#222"/><path d="M5.5 6V11M3 8.5H8" stroke="#222" stroke-width="1.3"/></svg>
<svg class="a" style="left:83px;top:713px" width="6" height="9"><path d="M0.5 0V9" stroke="#999"/><path d="M6 0V9L2 4.5Z" fill="#999"/></svg>
<svg class="a" style="left:100px;top:713px" width="5" height="9"><path d="M5 0V9L0 4.5Z" fill="#999"/></svg>
<div class="a" style="left:131px;top:711px;font-size:12px;color:#222">1 / 1</div>
<svg class="a" style="left:187px;top:713px" width="5" height="9"><path d="M0 0V9L5 4.5Z" fill="#999"/></svg>
<svg class="a" style="left:201px;top:713px" width="7" height="9"><path d="M0 0V9L4 4.5Z" fill="#999"/><path d="M6 0V9" stroke="#999"/></svg>
<svg class="a" style="left:217px;top:711px" width="10" height="12" viewBox="0 0 11 13"><path d="M0.5 0.5H6.5L10.5 4.5V12.5H0.5Z" fill="#fff" stroke="#222"/><path d="M6.5 0.5V4.5H10.5" fill="none" stroke="#222"/><path d="M5.5 6V11M3 8.5H8" stroke="#222" stroke-width="1.3"/></svg>
<svg class="a" style="left:231px;top:709px" width="56" height="18" viewBox="0 0 56 18"><path d="M0.5 0.5H48L55.5 8V17.5H0.5Z" fill="url(#tabg)" stroke="#7ab0d8"/><defs><linearGradient id="tabg" x1="0" y1="0" x2="0" y2="1"><stop offset="0" stop-color="#cfe6f8"/><stop offset="1" stop-color="#8cc4ec"/></linearGradient></defs></svg>
<div class="a" style="left:246px;top:710px;font-size:12.5px;color:#1a2a3a">页 1</div>
<svg class="a" style="left:490px;top:712px" width="3" height="13"><path d="M1.5 1v1M1.5 5v1M1.5 9v1" stroke="#999"/></svg>
<div class="a" style="left:496px;top:710px;width:1px;height:17px;background:#c8c8c8"></div>
<svg class="a" style="left:503px;top:715px" width="4" height="7"><path d="M4 0V7L0 3.5Z" fill="#333"/></svg>
<div class="a" style="left:625px;top:711px;width:278px;height:14px;border:1px solid #9a9a9a;border-radius:2px;background:linear-gradient(#f0f0f0,#d8d8d8 60%,#cfcfcf)"></div>
<svg class="a" style="left:905px;top:715px" width="4" height="7"><path d="M0 0V7L4 3.5Z" fill="#333"/></svg>
<svg class="a" style="left:916px;top:712px" width="14" height="14"><circle cx="5.5" cy="5.5" r="4.5" fill="#fff" stroke="#333" stroke-width="1.2"/><path d="M3.5 5.5H7.5M5.5 3.5V7.5" stroke="#333"/><path d="M8.5 8.5L13 13" stroke="#333" stroke-width="2"/></svg>
<!-- doc palette -->
<div id="docpal" class="a"></div>
<svg class="a" style="left:42px;top:730px" width="3" height="15"><path d="M1.5 1v1M1.5 5v1M1.5 9v1M1.5 13v1" stroke="#aaa"/></svg>
<svg class="a" style="left:47px;top:730px" width="16" height="16"><circle cx="8" cy="8" r="7" fill="#fafafa" stroke="#ccc"/><circle cx="8" cy="8" r="5" fill="none" stroke="#ddd"/><path d="M6.5 5 L10.5 8 L6.5 11Z" fill="#111"/></svg>
<svg class="a" style="left:66px;top:730px" width="13" height="15"><path d="M1.5 13.5 L8 7" stroke="#333" stroke-width="2"/><path d="M7 4 L11 0.5 L12.5 2 L9 6Z" fill="#333"/><path d="M6 5L10 9" stroke="#333" stroke-width="1.5"/></svg>
<svg class="a" style="left:82px;top:729px" width="16" height="17"><rect x="0.5" y="0.5" width="15" height="16" fill="#fff" stroke="#222"/><path d="M0.5 0.5L15.5 16.5M15.5 0.5L0.5 16.5" stroke="#222"/></svg>
<div class="a" style="left:99px;top:729px;width:17px;height:17px;background:#c8509a;border:1px solid #8a6a80"></div>
<div class="a" style="left:115px;top:729px;width:17px;height:17px;background:#cf72b0;border:1px solid #8a6a80"></div>
<svg class="a" style="left:901px;top:730px" width="3" height="16"><path d="M1.5 1v1M1.5 5v1M1.5 9v1M1.5 13v1" stroke="#aaa"/></svg>
<!-- status -->
<div id="status" class="a"></div>
<div class="a st" id="st1" style="left:12px;top:753px;font-size:11px;letter-spacing:0.1px">( 158.363, 49.254 )</div>
<svg class="a" style="left:127px;top:755px" width="6" height="9"><path d="M0 0V9L6 4.5Z" fill="#111"/></svg>
<div class="a st" id="st2" style="left:326px;top:752px">椭圆形 于 图层 1</div>
<svg class="a" style="left:619px;top:752px" width="14" height="15"><rect x="0.5" y="0.5" width="13" height="12" fill="#dde2ee" stroke="#8890a8"/><rect x="3.5" y="3.5" width="7" height="6" fill="#fff" stroke="#8890a8"/><path d="M3 14.5H11" stroke="#6a8ac8"/></svg>
<div class="a" style="left:862px;top:753px;width:20px;height:12px;background:linear-gradient(90deg,#f0f0f0,#c4c4c4 30%,#cfcfcf 70%,#f0f0f0);opacity:0.9"></div>
<svg class="a" style="left:911px;top:755px" width="19" height="19" viewBox="0 0 19 19"><rect x="0.5" y="0.5" width="15" height="16" fill="#f4f8ff" stroke="#b8c8e0"/><ellipse cx="8" cy="7" rx="3" ry="4.5" fill="#c83a1a"/><path d="M1 16.5 Q2 11 8 11.5 Q14 11 15 16.5Z" fill="#c84a20"/><path d="M19 13V19H13Z" fill="#000"/></svg><svg class="a" style="left:943px;top:777px" width="9" height="14"><path d="M7.5 1v1M7.5 5v1M4.5 5v1M7.5 9v1M4.5 9v1M1.5 9v1" stroke="#aab" /></svg>
<div class="a st" id="st3" style="left:12px;top:772px">文档颜色预置文件:</div><div class="a st" id="st4" style="left:115px;top:773px;font-size:11px;letter-spacing:-0.27px">RGB: sRGB IEC61966-2.1; CMYK: Japan Color 2001 Coated;</div><div class="a st" id="st5" style="left:408px;top:772px">灰度:</div><div class="a st" id="st6" style="left:439px;top:773px;font-size:11px;letter-spacing:-0.2px">Dot Gain 15%</div>
<svg class="a" style="left:511px;top:774px" width="6" height="9"><path d="M0 0V9L6 4.5Z" fill="#111"/></svg>
</body></html>
